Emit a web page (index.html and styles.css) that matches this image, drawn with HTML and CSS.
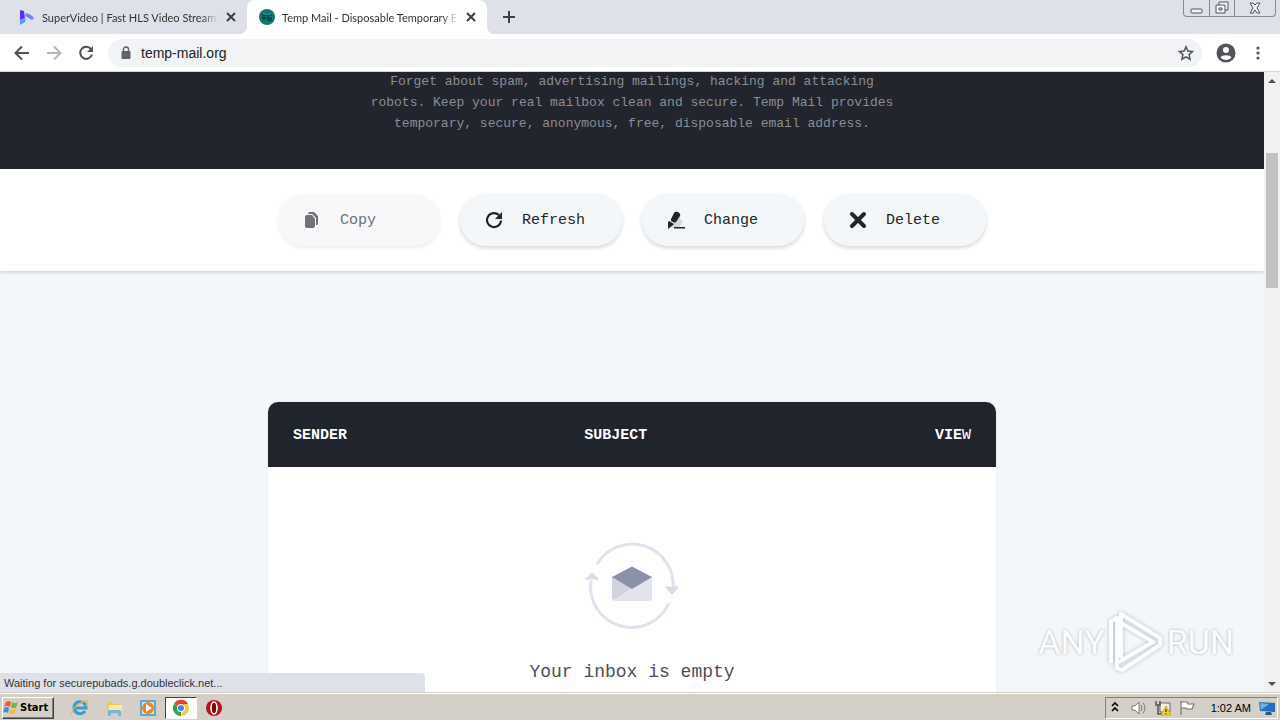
FILE: index.html
```html
<!DOCTYPE html>
<html lang="en">
<head>
  <meta charset="UTF-8" />
  <meta name="viewport" content="width=device-width, initial-scale=1.0"/>
  <title>Temp Mail - Disposable Temporary Email</title>
  <link rel="stylesheet" href="styles.css">
</head>
<body>

  <header class="tab-strip">
    <div class="tab">
      <svg class="tab-icon" viewBox="0 0 16 16">
        <path d="M1 1l4 1 1 7-5 2z" fill="#5a2ff5"/>
        <path d="M7 4q5 1 8 5l-2 2-7-4z" fill="#6a86ff"/>
        <path d="M1 11l6-2-1 4-5 3z" fill="#55a0ff"/>
      </svg>
      <span class="tab-title">SuperVideo | Fast HLS Video Streami</span>
      <button class="tab-close" aria-label="Close SuperVideo tab"><svg viewBox="0 0 12 12"><path d="M2 2l8 8M10 2l-8 8"/></svg></button>
    </div>
    <div class="tab active">
      <svg class="tab-icon" viewBox="0 0 16 16">
        <circle cx="8" cy="8" r="8" fill="#12766e"/>
        <path d="M3 6h4M5 6v5M9 6h4M9 6v5h4M3 9h10" stroke="#0b3f49" stroke-width="1.3" fill="none"/>
        <path d="M4 5h3M9 5h3" stroke="#3fae98"/>
      </svg>
      <span class="tab-title">Temp Mail - Disposable Temporary Er</span>
      <button class="tab-close" aria-label="Close Temp Mail tab"><svg viewBox="0 0 12 12"><path d="M2 2l8 8M10 2l-8 8"/></svg></button>
    </div>
    <button class="new-tab" aria-label="New tab"><svg viewBox="0 0 12 12"><path d="M6 0v12M0 6h12"/></svg></button>
    <div class="window-controls">
      <button class="minimize" aria-label="Minimize"><svg viewBox="0 0 16 16"><rect x="2" y="9" width="11" height="4" rx="1"/></svg></button>
      <button class="restore" aria-label="Restore"><svg viewBox="0 0 16 16"><path d="M5 5V2h9v8h-3M2 5h9v8H2zM5 8h3v2H5z"/></svg></button>
      <button class="close" aria-label="Close"><svg viewBox="0 0 16 16"><path d="M3 3h3l2 2 2-2h3l-3 5 3 5h-3l-2-3-2 3H3l3-5z"/></svg></button>
    </div>
  </header>

  <nav class="toolbar">
    <button aria-label="Back"><svg viewBox="0 0 16 16"><path d="M15 8H2M8 1.5L1.5 8 8 14.5"/></svg></button>
    <button class="forward" aria-label="Forward"><svg viewBox="0 0 16 16"><path d="M1 8h13M8 1.5L14.5 8 8 14.5"/></svg></button>
    <button aria-label="Reload"><svg viewBox="0 0 16 16"><path d="M13 4.2A6 6 0 1 0 14 9.5"/><path class="solid" d="M15 1v6H9z"/></svg></button>
    <div class="omnibox">
      <svg class="lock" viewBox="0 0 12 14"><rect x="1.5" y="5" width="9" height="8" rx="1" fill="#5f6368"/><path d="M3.5 5V3.5a2.5 2.5 0 0 1 5 0V5" fill="none" stroke="#5f6368" stroke-width="1.4"/></svg>
      <input type="text" value="temp-mail.org" aria-label="Address">
      <button aria-label="Bookmark this tab"><svg viewBox="0 0 16 16"><path class="star" d="M8 1.8l1.9 4.2 4.6.5-3.4 3.1.9 4.6-4-2.4-4 2.4.9-4.6L1.5 6.5l4.6-.5z"/></svg></button>
    </div>
    <button class="profile" aria-label="Profile"><svg viewBox="0 0 20 20"><circle class="solid" cx="10" cy="10" r="9.5"/><circle cx="10" cy="7" r="3" fill="#fff" stroke="none"/><path d="M4.5 14.5c1-3 10-3 11 0-2.5 3.3-8.5 3.3-11 0z" fill="#fff" stroke="none"/></svg></button>
    <button aria-label="Menu"><svg viewBox="0 0 16 16"><circle class="solid" cx="8" cy="3" r="1.6"/><circle class="solid" cx="8" cy="8" r="1.6"/><circle class="solid" cx="8" cy="13" r="1.6"/></svg></button>
  </nav>

  <div class="viewport">
    <main class="page">
      <section class="hero">
        <p>Forget about spam, advertising mailings, hacking and attacking robots. Keep your real mailbox clean and secure. Temp Mail provides temporary, secure, anonymous, free, disposable email address.</p>
      </section>

      <section class="actions">
        <button disabled>
          <svg viewBox="0 0 18 18"><path d="M5 3q0-2 2-2h4l4 4v7q0 2-1 2h-1V7L9 3z"/><path d="M4 4h5l3 4v7q0 2-2 2H4q-2 0-2-2V6q0-2 2-2z"/></svg>
          Copy
        </button>
        <button>
          <svg viewBox="0 0 18 18"><path d="M14 4.2A7 7 0 1 0 16 9.5" fill="none" stroke="#212529" stroke-width="2.2"/><path d="M17 1v7h-7z"/></svg>
          Refresh
        </button>
        <button>
          <svg viewBox="0 0 18 18"><path d="M2 17L12 6l4 5-5 6z" fill="#d5d7da"/><path d="M7 2q1-2 4-1 3 2 2 4L9 11q-1 1-3 0-3-1-2-3z"/><path d="M1 11l1-1 5 3-1 1-5 4z"/><path d="M7 16h11v1.5H7z"/></svg>
          Change
        </button>
        <button>
          <svg viewBox="0 0 18 18"><path d="M3 3l12 12M15 3L3 15" stroke="#212529" stroke-width="4" stroke-linecap="round"/></svg>
          Delete
        </button>
      </section>

      <section class="inbox">
        <table>
          <thead>
            <tr>
              <th class="sender">Sender</th>
              <th>Subject</th>
              <th class="view">Vie<span>w</span></th>
            </tr>
          </thead>
        </table>
        <div class="empty">
          <svg viewBox="0 0 92 88">
            <g fill="none" stroke="#e2e2ee" stroke-width="3">
              <path d="M11 24A41 41 0 0 1 87 49"/>
              <path d="M83 63A41 41 0 0 1 5 40"/>
            </g>
            <path d="M80 48q-1-2 1-2l5 1 5-1q2 0 1 2l-5 6q-1 1-2 0z" fill="#dcdce8"/>
            <path d="M0 40q-1-1 0-2l5-5q1-1 2 0l5 5q1 2-1 2l-5-1z" fill="#dcdce8"/>
            <path d="M26 36h40v22a3 3 0 0 1-3 3H29a3 3 0 0 1-3-3z" fill="#e3e3ee"/>
            <path d="M26 36l20 12-19 12q-1-1-1-3z" fill="#d2d3df"/>
            <path d="M45 27q1-1 2 0l19 10-20 12-20-12z" fill="#8b91a9"/>
          </svg>
          <h2>Your inbox is empty</h2>
        </div>
      </section>
    </main>

    <div class="scrollbar">
      <div class="arrow up"></div>
      <div class="track"><div class="thumb"></div></div>
      <div class="arrow down"></div>
    </div>

    <div class="status">Waiting for securepubads.g.doubleclick.net...</div>

    <div class="watermark">
      <span>ANY</span>
      <svg viewBox="0 0 58 64">
        <path d="M10 53V8l-6 3v42"/>
        <path d="M14 48V4l39 24v7L15 60l-5-2v-5l36-21-32-19"/>
      </svg>
      <span>RUN</span>
    </div>
  </div>

  <footer class="taskbar">
    <button class="start">
      <svg viewBox="0 0 16 16"><path d="M3 2q3-2 5 0L7 7Q4 5 1 7z" fill="#e8602c"/><path d="M9 2q3 2 6 0l-2 6q-3 1-5-1z" fill="#79b543"/><path d="M1 8q3-2 5 0l-1 5q-3-2-5 0z" fill="#3e8fd8"/><path d="M7 9q3 2 6 0l-2 5q-3 1-5-1z" fill="#f4bd35"/></svg>
      Start
    </button>
    <button class="task" aria-label="Internet Explorer"><svg viewBox="0 0 18 18"><path d="M14 12A6 6 0 1 1 15 9H4" fill="none" stroke="#379bd9" stroke-width="3"/><path d="M1 15Q0 10 8 5t9-2q0 2-2 4" fill="none" stroke="#e6b83c" stroke-width="1.3"/></svg></button>
    <button class="task" aria-label="Explorer"><svg viewBox="0 0 18 18"><path d="M2 3h5l1 2h7v10H2z" fill="#e9c861"/><path d="M4 6h13v6H4z" fill="#f9e9a5"/><path d="M3 17v-4q0-2 2-2h9q2 0 2 2v4h-3v-3H6v3z" fill="#74b7dc"/></svg></button>
    <button class="task" aria-label="Media Player"><svg viewBox="0 0 18 18"><path d="M1 1h16v16H1z" fill="#67a5d1"/><path d="M3 3h12v12H3z" fill="#d7ebf5"/><circle cx="9" cy="9" r="6" fill="#ef8518"/><path d="M7 5l6 4-6 4z" fill="#fff"/></svg></button>
    <button class="task current" aria-label="Chrome"><svg viewBox="0 0 18 18"><path d="M9 9L2 5a8 8 0 0 1 14 0z" fill="#df4132"/><path d="M9 9v8A8 8 0 0 1 2 5z" fill="#31a350"/><path d="M9 9h8a8 8 0 0 1-8 8l4-8-1-4h4l1 4z" fill="#f7ca36"/><circle cx="9" cy="9" r="4" fill="#fff"/><circle cx="9" cy="9" r="3" fill="#4384e6"/></svg></button>
    <button class="task" aria-label="Opera"><svg viewBox="0 0 18 18"><circle cx="9" cy="9" r="8" fill="#b9141c"/><ellipse cx="9" cy="9" rx="3" ry="6" fill="#7d060b" stroke="#fff" stroke-width="1.6"/></svg></button>
    <div class="tray">
      <svg viewBox="0 0 16 16"><path d="M5 6l3-3 3 3M5 11l3-3 3 3" fill="none" stroke="#000" stroke-width="1.6"/></svg>
      <svg viewBox="0 0 16 16"><path d="M1 6h3l4-4v12l-4-4H1z" fill="#fff" stroke="#777"/><path d="M10 5q2 3 0 6M12 3q4 5 0 10" fill="none" stroke="#777"/></svg>
      <svg viewBox="0 0 16 16"><path d="M5 3h10v9H5z" fill="#eee" stroke="#666"/><path d="M1 1v4h4V1M3 5v9h5" fill="none" stroke="#555" stroke-width="1.5"/><path d="M11 6l5 9H6z" fill="#ffd429" stroke="#b89300" stroke-width=".7"/><path d="M11 9v3M11 13v1" stroke="#000"/></svg>
      <svg viewBox="0 0 16 16"><path d="M2 15V1M2 2h6l1 2h6l-2 5H8L7 8H2" fill="#fff" stroke="#777" stroke-width="1.2"/></svg>
      <time>1:02 AM</time>
      <svg viewBox="0 0 16 16"><path d="M0 2l16 1v9L1 11z" fill="#286dbd"/><path d="M1 3l9 1-8 6z" fill="#70aee4"/><path d="M7 12h5l1 3H6z" fill="#275991"/></svg>
    </div>
  </footer>

</body>
</html>
```
FILE: styles.css
```css
* {
  box-sizing: border-box;
}

body {
  margin: 0;
  height: 100vh;
  display: flex;
  flex-direction: column;
  overflow: hidden;
  font-family: 'Liberation Sans', Arial, sans-serif;
  font-size: 11px;
  color: #333;
}

button {
  padding: 0;
  border: 0;
  background: none;
  font: inherit;
  color: inherit;
}

svg {
  display: block;
  flex-shrink: 0;
}

/* browser tabs */
.tab-strip {
  display: flex;
  align-items: center;
  height: 34px;
  padding-left: 7px;
  background: #dee1e9;
}

.tab {
  position: relative;
  display: flex;
  align-items: center;
  gap: 7px;
  width: 240px;
  height: 34px;
  padding: 0 10px 0 12px;
}

.tab.active {
  background: #fff;
  border-radius: 8px 8px 0 0;
}

.tab.active::before,
.tab.active::after {
  content: '';
  position: absolute;
  bottom: 0;
  width: 8px;
  height: 8px;
}

.tab.active::before {
  right: 100%;
  background: radial-gradient(circle at 0 0, transparent 8px, #fff 8px);
}

.tab.active::after {
  left: 100%;
  background: radial-gradient(circle at 100% 0, transparent 8px, #fff 8px);
}

.tab-icon {
  width: 16px;
  height: 16px;
}

.tab-title {
  flex: 1;
  overflow: hidden;
  white-space: nowrap;
  font-family: Lato, sans-serif;
  -webkit-mask-image: linear-gradient(to left, transparent, #000 16px);
  mask-image: linear-gradient(to left, transparent, #000 16px);
}

.tab-close svg,
.new-tab svg {
  width: 12px;
  height: 12px;
  fill: none;
  stroke: #3c4043;
  stroke-width: 2;
}

.new-tab {
  margin-left: 16px;
}

.window-controls {
  display: flex;
  align-self: flex-start;
  height: 17px;
  margin: 0 4px 0 auto;
  border: 1px solid #878a94;
  border-top: 0;
  border-radius: 0 0 4px 4px;
}

.window-controls button {
  display: flex;
  justify-content: center;
  width: 25px;
}

.window-controls button + button {
  border-left: 1px solid #878a94;
}

.window-controls .close {
  width: 41px;
}

.window-controls svg {
  width: 16px;
  height: 16px;
  fill: #f4f5f8;
  stroke: #50535c;
}

/* address bar */
.toolbar {
  display: flex;
  align-items: center;
  gap: 16px;
  height: 38px;
  padding: 0 14px;
  background: #fff;
  border-bottom: 1px solid #d5d8dc;
}

.toolbar button svg {
  width: 16px;
  height: 16px;
  fill: none;
  stroke: #505357;
  stroke-width: 2;
}

.toolbar .forward svg {
  stroke: #b5b7ba;
}

.toolbar .solid {
  fill: #505357;
  stroke: none;
}

.toolbar .star {
  stroke-width: 1.5;
}

.toolbar .profile svg {
  width: 20px;
  height: 20px;
}

.toolbar .profile {
  margin: 0 -2px;
}

.omnibox {
  flex: 1;
  display: flex;
  align-items: center;
  height: 28px;
  margin-left: -2px;
  padding: 0 8px 0 12px;
  border-radius: 14px;
  background: #f1f3f4;
}

.omnibox .lock {
  width: 12px;
  height: 14px;
}

.omnibox input {
  flex: 1;
  min-width: 0;
  padding: 0 0 0 9px;
  border: 0;
  outline: 0;
  background: none;
  font-family: inherit;
  font-size: 14px;
  color: #202124;
}

/* web page */
.viewport {
  position: relative;
  flex: 1;
  min-height: 0;
  display: flex;
}

.page {
  flex: 1;
  overflow: hidden;
  background: #f4f7fa;
  font-family: 'Liberation Mono', monospace;
}

.hero {
  display: flex;
  flex-direction: column;
  justify-content: flex-end;
  align-items: center;
  height: 97px;
  padding-bottom: 35px;
  overflow: hidden;
  background: #22252e;
}

.hero p {
  max-width: 540px;
  margin: 0;
  font-size: 13px;
  line-height: 21px;
  text-align: center;
  color: #8b8d93;
}

.actions {
  display: flex;
  justify-content: center;
  gap: 20px;
  padding: 25px 0;
  background: #fff;
  box-shadow: 0 1px 4px rgba(0, 0, 0, 0.2);
}

.actions button {
  display: flex;
  align-items: center;
  gap: 19px;
  width: 162px;
  height: 52px;
  padding-left: 25px;
  border-radius: 26px;
  background: #f4f7fa;
  box-shadow: 0 2px 4px rgba(0, 0, 0, 0.16);
  font-size: 15px;
  color: #212529;
}

.actions button:disabled {
  background: #f8f8fb;
  box-shadow: 0 2px 4px rgba(0, 0, 0, 0.07);
  color: #707276;
}

.actions svg {
  width: 18px;
  height: 18px;
  fill: currentColor;
}

.inbox {
  max-width: 728px;
  margin: 131px auto 0;
  border-radius: 10px 10px 0 0;
  overflow: hidden;
  background: #fff;
  box-shadow: 0 0 1px #aaadb8;
}

.inbox table {
  width: 100%;
  border-collapse: collapse;
  table-layout: fixed;
}

.inbox th {
  height: 65px;
  padding: 2px 25px 0;
  background: #20242c;
  color: #fff;
  font-size: 15px;
  text-align: left;
  text-transform: uppercase;
}

.inbox .sender {
  width: 40%;
}

.inbox .view {
  text-align: right;
}

.inbox .view span {
  font-weight: normal;
}

.empty {
  display: flex;
  flex-direction: column;
  align-items: center;
  padding: 73px 0 80px;
}

.empty svg {
  width: 92px;
  height: 88px;
  overflow: visible;
}

.empty h2 {
  margin: 32px 0 0;
  font-size: 18px;
  font-weight: normal;
  line-height: 24px;
  color: #4c4e57;
}

.scrollbar {
  display: flex;
  flex-direction: column;
  width: 16px;
  background: #f1f1f1;
}

.arrow {
  display: flex;
  align-items: center;
  justify-content: center;
  height: 17px;
}

.arrow::before {
  content: '';
  border: 4px solid transparent;
}

.up::before {
  margin-top: -4px;
  border-bottom-color: #505050;
}

.down::before {
  margin-top: 4px;
  border-top-color: #505050;
}

.track {
  flex: 1;
  padding: 64px 2px 0;
}

.thumb {
  height: 135px;
  background: #c1c1c1;
}

.status {
  position: absolute;
  left: 0;
  bottom: 0;
  width: 425px;
  height: 19px;
  padding-left: 4px;
  border-radius: 0 4px 0 0;
  background: #dee1e9;
  line-height: 20px;
}

.watermark {
  position: absolute;
  right: 46px;
  bottom: 18px;
  display: flex;
  align-items: center;
  gap: 2px;
  font-family: Roboto, sans-serif;
  font-size: 34px;
  color: #fbfcfd;
  text-shadow: 0 0 3px #a9adb1;
}

.watermark svg {
  width: 58px;
  height: 64px;
  fill: none;
  stroke: #fbfcfd;
  stroke-width: 4;
  stroke-linejoin: round;
  filter: drop-shadow(0 0 2px #b9bdc1);
}

/* taskbar */
.taskbar {
  display: flex;
  align-items: center;
  height: 28px;
  padding: 2px 2px 0;
  border-top: 1px solid #d4d0c8;
  background: #d4d0c8;
  box-shadow: inset 0 1px #fff;
  color: #000;
}

.start {
  display: flex;
  align-items: center;
  gap: 1px;
  width: 52px;
  height: 22px;
  margin-right: 9px;
  border: 1px solid;
  border-color: #fff #404040 #404040 #fff;
  box-shadow: inset -1px -1px #808080;
  font-family: 'DejaVu Sans Condensed', 'DejaVu Sans', sans-serif;
  font-weight: bold;
}

.start svg {
  width: 16px;
  height: 16px;
}

.task {
  display: flex;
  align-items: center;
  justify-content: center;
  width: 34px;
  height: 22px;
}

.task svg {
  width: 18px;
  height: 18px;
}

.task.current {
  width: 32px;
  border: 1px solid;
  border-color: #404040 #fff #fff #404040;
  background: #fff;
}

.tray {
  display: flex;
  align-items: center;
  gap: 8px;
  height: 22px;
  margin-left: auto;
  padding: 0 2px 0 1px;
  border: 1px solid;
  border-color: #808080 #fff #fff #808080;
}

.tray svg {
  width: 16px;
  height: 16px;
}

.tray time {
  margin-left: 8px;
}
```
